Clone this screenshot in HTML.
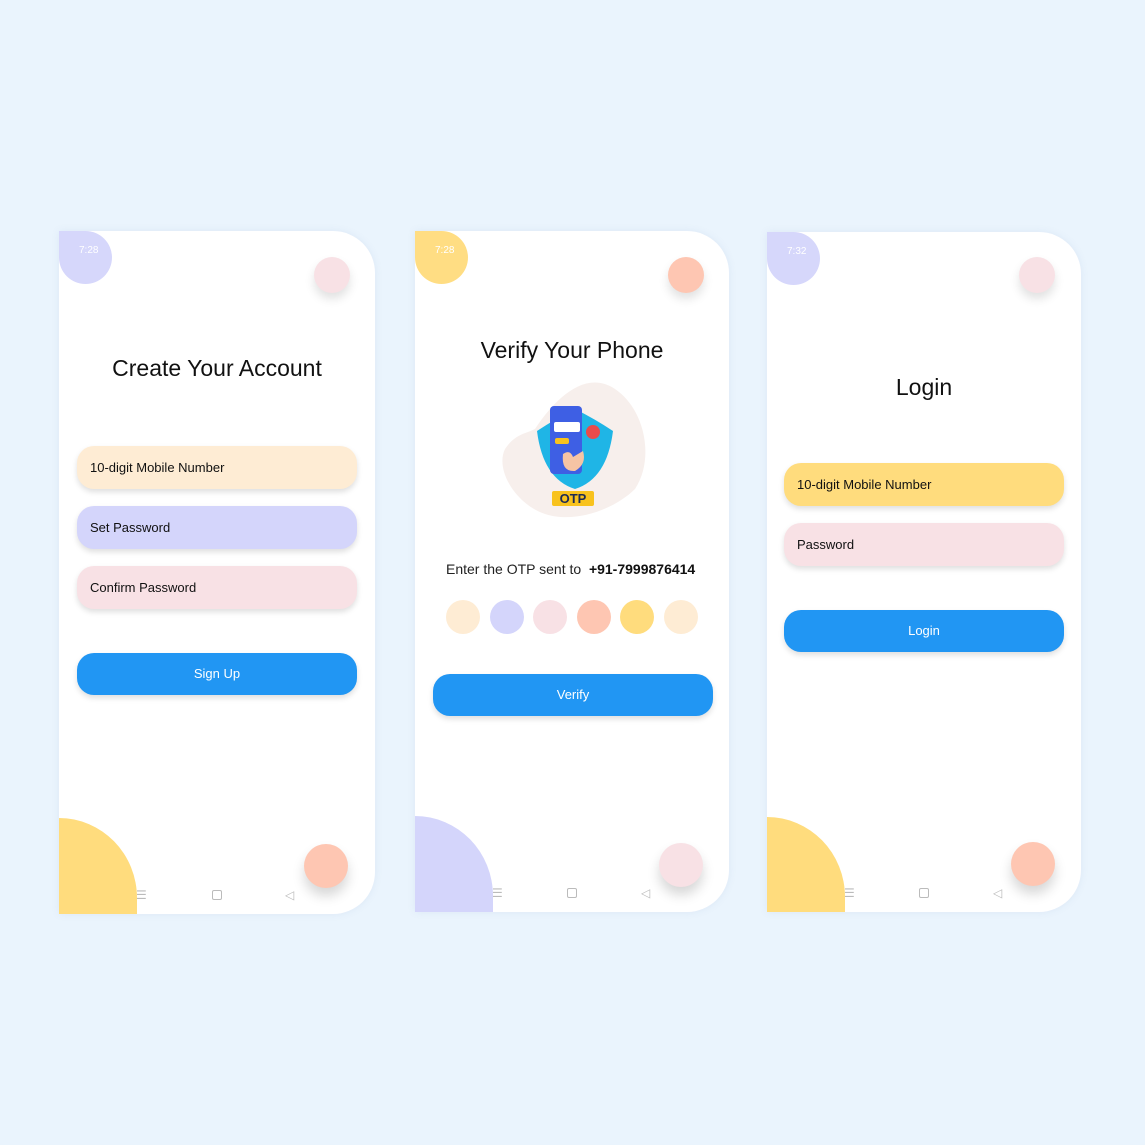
<!DOCTYPE html><html><head><style>
*{margin:0;padding:0;box-sizing:border-box}
body{width:1145px;height:1145px;background:#eaf4fd;position:relative;overflow:hidden;font-family:"Liberation Sans",sans-serif}
.ph{position:absolute;background:#fff;border-radius:0 42px 42px 0;overflow:hidden;box-shadow:0 0 8px rgba(120,150,190,.12)}
.tl{position:absolute;left:0;top:0;width:53px;height:53px;border-radius:0 50% 50% 50%;color:#fff;font-size:10px;padding:14px 0 0 20px;opacity:.95}
.tr{position:absolute;width:36px;height:36px;border-radius:50%;box-shadow:0 6px 10px rgba(0,0,0,.12)}
.bl{position:absolute;left:0;width:78px;height:97px;border-radius:0 78px 0 0/0 80px 0 0}
.br{position:absolute;width:44px;height:44px;border-radius:50%;box-shadow:0 8px 12px rgba(0,0,0,.16)}
.f{position:absolute;left:18px;width:280px;height:43px;border-radius:17px;font-size:13px;color:#111;padding:14px 0 0 13px;box-shadow:0 3px 6px rgba(0,0,0,.13)}
.b{position:absolute;left:18px;width:280px;height:42px;border-radius:17px;background:#2196f3;color:#fff;font-size:13px;text-align:center;line-height:42px;box-shadow:0 3px 6px rgba(0,0,0,.13)}
.t{position:absolute;left:0;width:100%;text-align:center;font-size:23px;color:#111}
.nav{position:absolute;bottom:12px;font-size:12px;color:#bbb}
.c{position:absolute;top:369px;width:34px;height:34px;border-radius:50%}
</style></head><body>

<div class="ph" style="left:59px;top:231px;width:316px;height:683px">
<div class="tl" style="background:#d4d5fb">7:28</div>
<div class="tr" style="background:#f8e1e5;left:255px;top:26px"></div>
<div class="t" style="top:124px">Create Your Account</div>
<div class="f" style="top:215px;background:#feecd4">10-digit Mobile Number</div>
<div class="f" style="top:275px;background:#d4d5fb">Set Password</div>
<div class="f" style="top:335px;background:#f8e1e5">Confirm Password</div>
<div class="b" style="top:422px">Sign Up</div>
<div class="nav" style="left:77px">☰</div>
<div style="position:absolute;left:153px;top:659px;width:10px;height:10px;border:1px solid #bbb;border-radius:2px"></div>
<div class="nav" style="left:226px">◁</div>
<div class="bl" style="background:#ffdc7d;top:587px"></div>
<div class="br" style="background:#fec6b2;left:245px;top:613px"></div>
</div>

<div class="ph" style="left:415px;top:231px;width:314px;height:681px">
<div class="tl" style="background:#ffdc7d">7:28</div>
<div class="tr" style="background:#fec6b2;left:253px;top:26px"></div>
<div class="t" style="top:106px">Verify Your Phone</div>
<svg style="position:absolute;left:80px;top:148px" width="160" height="145" viewBox="0 0 160 145">
<path d="M40 50 C60 20 90 -10 120 10 C150 30 160 80 140 110 C120 130 80 145 50 135 C20 125 0 90 10 70 C20 55 30 55 40 50Z" fill="#f7efec"/>
<path d="M42 52 Q60 40 80 30 Q100 40 118 52 Q112 100 80 110 Q48 100 42 52Z" fill="#1fb5e6"/>
<rect x="55" y="27" width="32" height="68" rx="4" fill="#3e5fe4"/>
<rect x="59" y="43" width="26" height="10" rx="2" fill="#fff"/>
<rect x="60" y="59" width="14" height="6" rx="2" fill="#f8c21d"/>
<circle cx="98" cy="53" r="7" fill="#ea4b4b"/>
<path d="M68 75 Q75 70 78 78 L88 72 Q92 85 80 92 Q66 93 68 75Z" fill="#f6c4a4"/>
<rect x="57" y="112" width="42" height="15" rx="2" fill="#f8c21d"/>
<text x="78" y="124" font-family="Liberation Sans" font-weight="bold" font-size="13" fill="#1c2a55" text-anchor="middle">OTP</text>
</svg>
<div style="position:absolute;left:31px;top:330px;font-size:14px;color:#222">Enter the OTP sent to &nbsp;<b style="font-weight:600;color:#111">+91-7999876414</b></div>
<div class="c" style="left:31px;background:#feecd4"></div>
<div class="c" style="left:75px;background:#d4d5fb"></div>
<div class="c" style="left:118px;background:#f8e1e5"></div>
<div class="c" style="left:162px;background:#fec6b2"></div>
<div class="c" style="left:205px;background:#ffdc7d"></div>
<div class="c" style="left:249px;background:#feecd4"></div>
<div class="b" style="top:443px">Verify</div>
<div class="nav" style="left:77px">☰</div>
<div style="position:absolute;left:152px;top:657px;width:10px;height:10px;border:1px solid #bbb;border-radius:2px"></div>
<div class="nav" style="left:226px">◁</div>
<div class="bl" style="background:#d4d5fb;top:585px"></div>
<div class="br" style="background:#f8e1e5;left:244px;top:612px"></div>
</div>

<div class="ph" style="left:767px;top:232px;width:314px;height:680px">
<div class="tl" style="background:#d4d5fb">7:32</div>
<div class="tr" style="background:#f8e1e5;left:252px;top:25px"></div>
<div class="t" style="top:142px">Login</div>
<div class="f" style="top:231px;background:#ffdc7d;left:17px">10-digit Mobile Number</div>
<div class="f" style="top:291px;background:#f8e1e5;left:17px">Password</div>
<div class="b" style="top:378px;left:17px">Login</div>
<div class="nav" style="left:77px">☰</div>
<div style="position:absolute;left:152px;top:656px;width:10px;height:10px;border:1px solid #bbb;border-radius:2px"></div>
<div class="nav" style="left:226px">◁</div>
<div class="bl" style="background:#ffdc7d;top:585px"></div>
<div class="br" style="background:#fec6b2;left:244px;top:610px"></div>
</div>
</body></html>
